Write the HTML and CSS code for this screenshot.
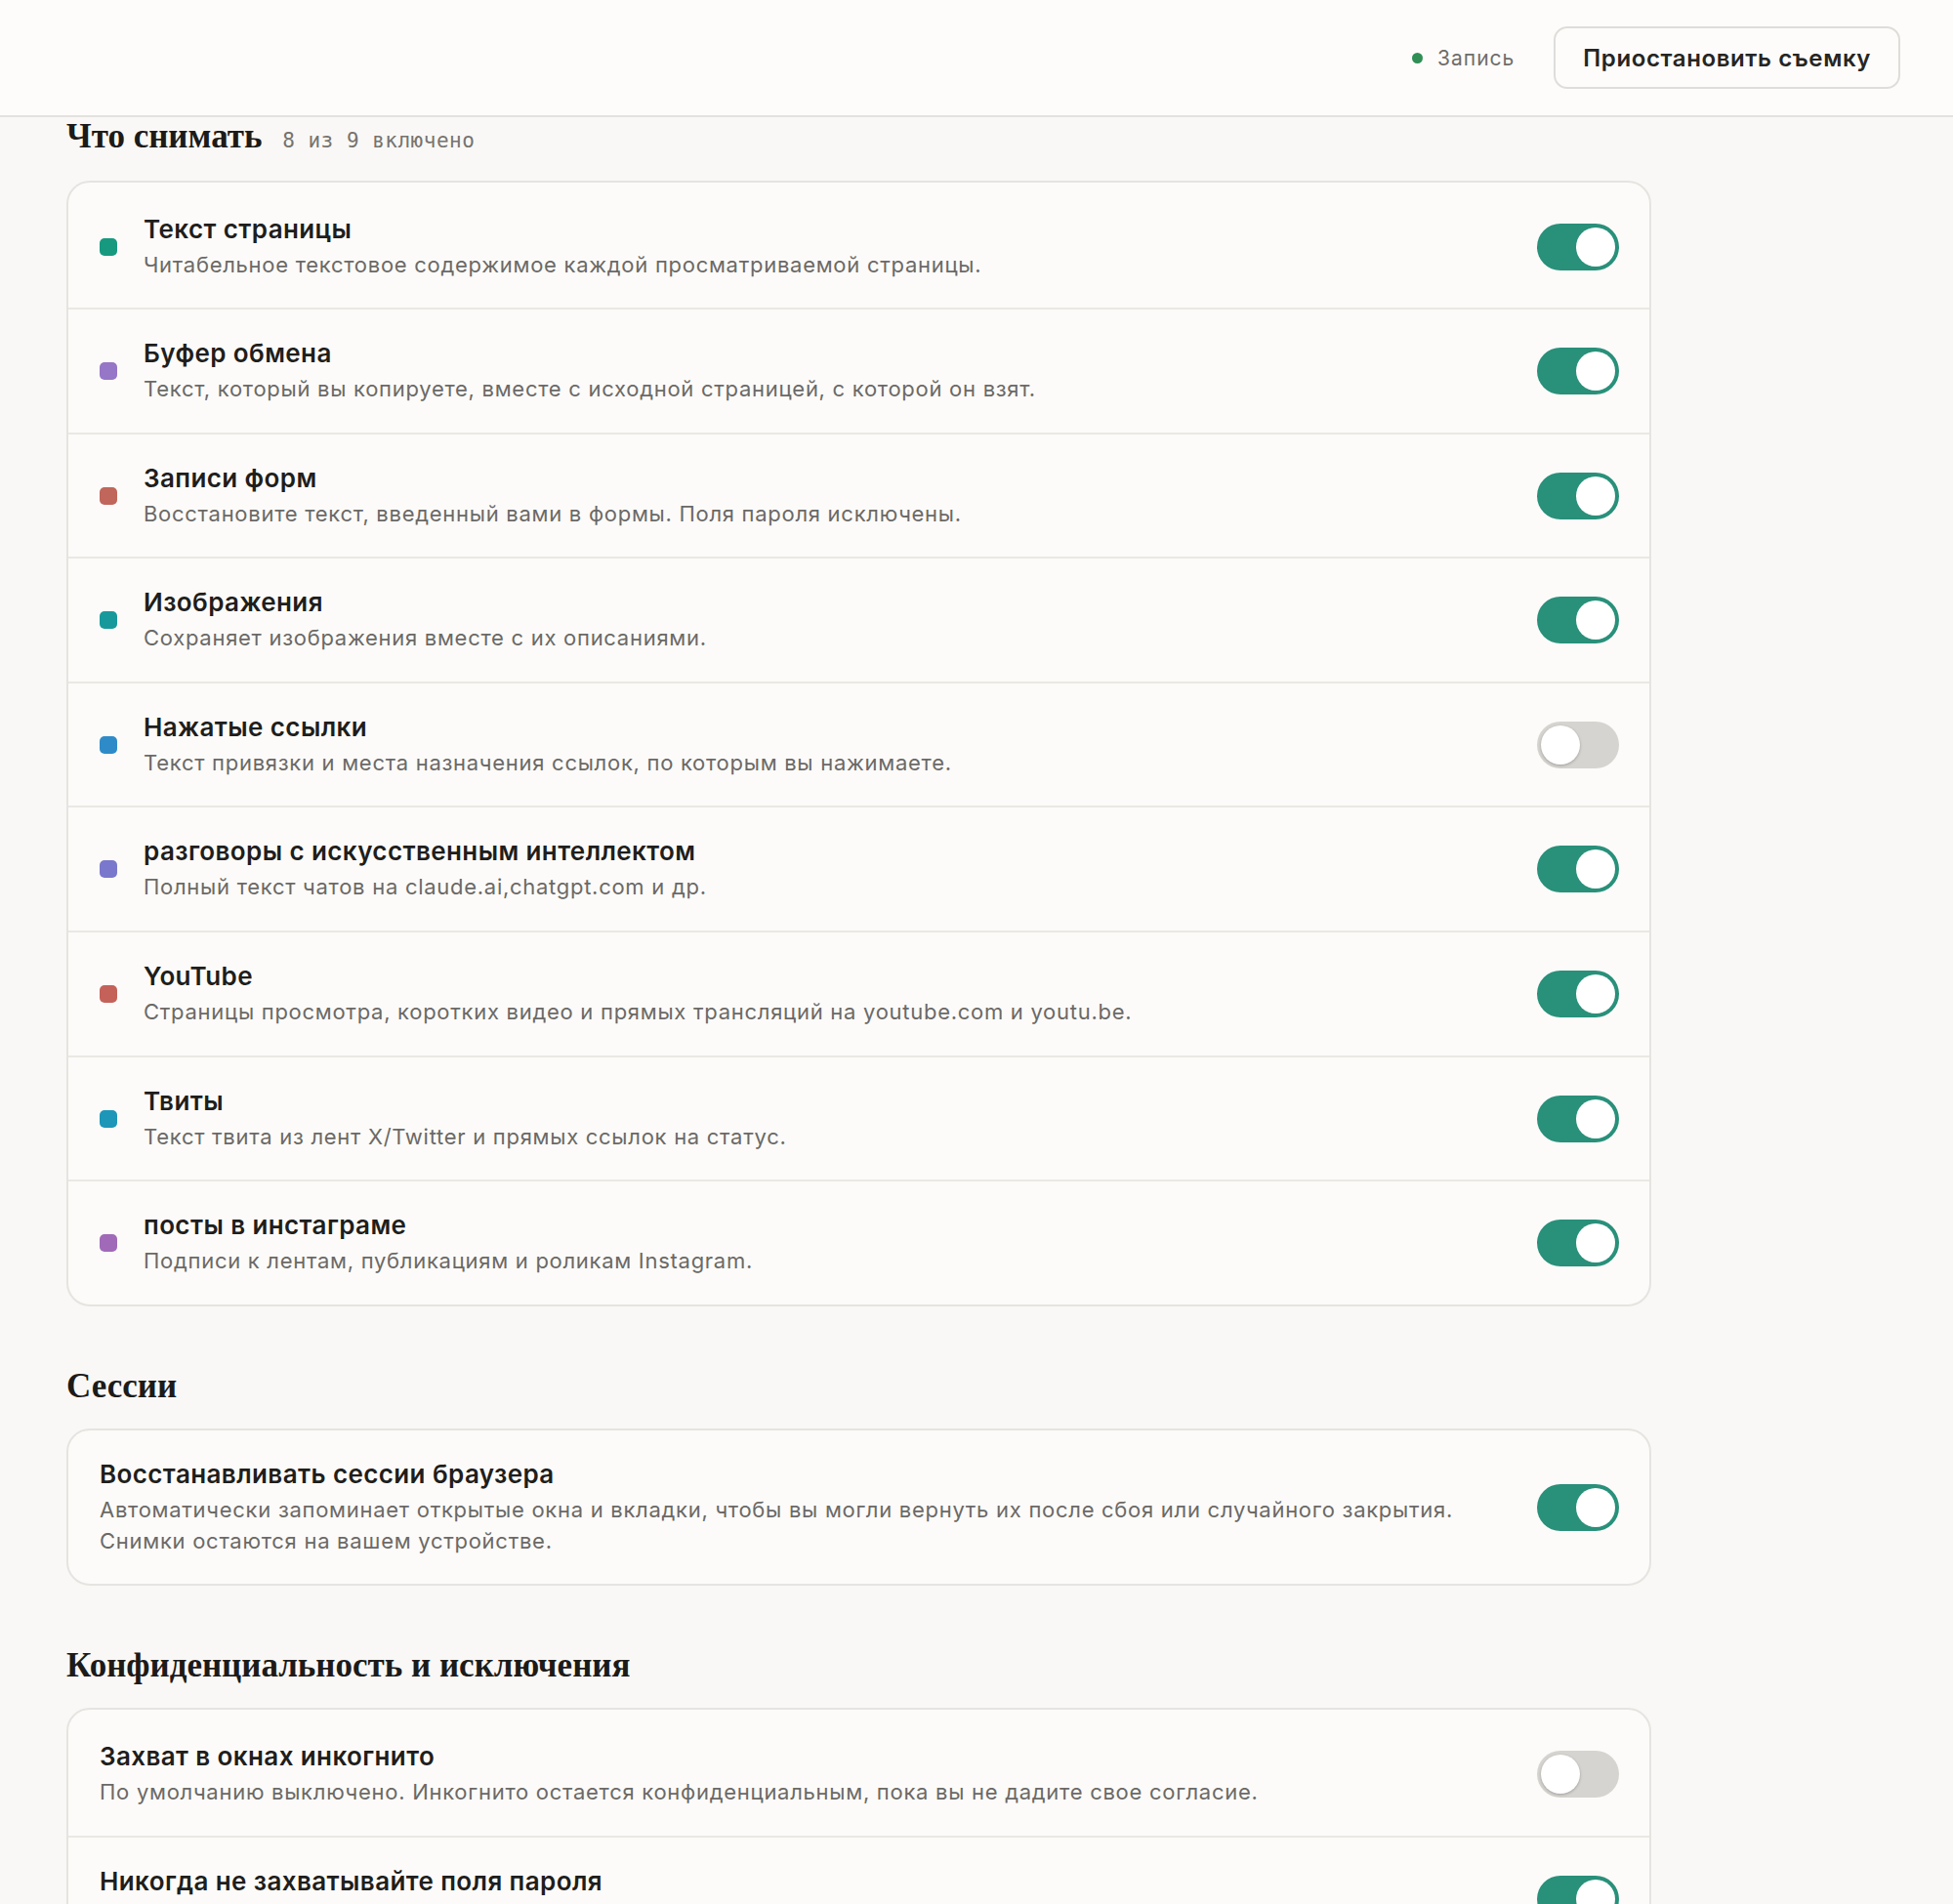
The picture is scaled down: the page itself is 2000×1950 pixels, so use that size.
FILE: index.html
```html
<!DOCTYPE html>
<html lang="ru">
<head>
  <meta charset="UTF-8">
  <meta name="viewport" content="width=device-width, initial-scale=1.0">
  <title>Настройки съемки</title>
  <link rel="stylesheet" href="styles.css">
</head>
<body>
<header class="top-bar">
  <div class="rec-status">
    <span class="rec-dot"></span>
    <span class="rec-label">Запись</span>
  </div>
  <button class="pause-btn">Приостановить съемку</button>
</header>

<main class="settings">
  <section class="group">
    <h2 class="group-title">Что снимать <span class="group-count">8 из 9 включено</span></h2>
    <div class="card">
      <div class="row">
        <span class="dot dot-page"></span>
        <div class="row-text">
          <div class="row-title">Текст страницы</div>
          <div class="row-desc">Читабельное текстовое содержимое каждой просматриваемой страницы.</div>
        </div>
        <span class="toggle on"><span class="knob"></span></span>
      </div>
      <div class="row">
        <span class="dot dot-clip"></span>
        <div class="row-text">
          <div class="row-title">Буфер обмена</div>
          <div class="row-desc">Текст, который вы копируете, вместе с исходной страницей, с которой он взят.</div>
        </div>
        <span class="toggle on"><span class="knob"></span></span>
      </div>
      <div class="row">
        <span class="dot dot-form"></span>
        <div class="row-text">
          <div class="row-title">Записи форм</div>
          <div class="row-desc">Восстановите текст, введенный вами в формы. Поля пароля исключены.</div>
        </div>
        <span class="toggle on"><span class="knob"></span></span>
      </div>
      <div class="row">
        <span class="dot dot-img"></span>
        <div class="row-text">
          <div class="row-title">Изображения</div>
          <div class="row-desc">Сохраняет изображения вместе с их описаниями.</div>
        </div>
        <span class="toggle on"><span class="knob"></span></span>
      </div>
      <div class="row">
        <span class="dot dot-link"></span>
        <div class="row-text">
          <div class="row-title">Нажатые ссылки</div>
          <div class="row-desc">Текст привязки и места назначения ссылок, по которым вы нажимаете.</div>
        </div>
        <span class="toggle"><span class="knob"></span></span>
      </div>
      <div class="row">
        <span class="dot dot-ai"></span>
        <div class="row-text">
          <div class="row-title">разговоры с искусственным интеллектом</div>
          <div class="row-desc">Полный текст чатов на claude.ai,chatgpt.com и др.</div>
        </div>
        <span class="toggle on"><span class="knob"></span></span>
      </div>
      <div class="row">
        <span class="dot dot-yt"></span>
        <div class="row-text">
          <div class="row-title">YouTube</div>
          <div class="row-desc">Страницы просмотра, коротких видео и прямых трансляций на youtube.com и youtu.be.</div>
        </div>
        <span class="toggle on"><span class="knob"></span></span>
      </div>
      <div class="row">
        <span class="dot dot-tw"></span>
        <div class="row-text">
          <div class="row-title">Твиты</div>
          <div class="row-desc">Текст твита из лент X/Twitter и прямых ссылок на статус.</div>
        </div>
        <span class="toggle on"><span class="knob"></span></span>
      </div>
      <div class="row">
        <span class="dot dot-ig"></span>
        <div class="row-text">
          <div class="row-title">посты в инстаграме</div>
          <div class="row-desc">Подписи к лентам, публикациям и роликам Instagram.</div>
        </div>
        <span class="toggle on"><span class="knob"></span></span>
      </div>
    </div>
  </section>

  <section class="group">
    <h2 class="group-title">Сессии</h2>
    <div class="card">
      <div class="row">
        <div class="row-text">
          <div class="row-title">Восстанавливать сессии браузера</div>
          <div class="row-desc">Автоматически запоминает открытые окна и вкладки, чтобы вы могли вернуть их после сбоя или случайного закрытия.<br>Снимки остаются на вашем устройстве.</div>
        </div>
        <span class="toggle on"><span class="knob"></span></span>
      </div>
    </div>
  </section>

  <section class="group">
    <h2 class="group-title">Конфиденциальность и исключения</h2>
    <div class="card">
      <div class="row">
        <div class="row-text">
          <div class="row-title">Захват в окнах инкогнито</div>
          <div class="row-desc">По умолчанию выключено. Инкогнито остается конфиденциальным, пока вы не дадите свое согласие.</div>
        </div>
        <span class="toggle"><span class="knob"></span></span>
      </div>
      <div class="row">
        <div class="row-text">
          <div class="row-title">Никогда не захватывайте поля пароля</div>
          <div class="row-desc">Значения полей пароля никогда не сохраняются.</div>
        </div>
        <span class="toggle on"><span class="knob"></span></span>
      </div>
    </div>
  </section>
</main>
</body>
</html>
```

FILE: styles.css
```css
body {
  margin: 0;
  font-family: Inter, "Noto Sans", sans-serif;
  background-color: #f9f8f6;
  color: #1f1e1c;
}

/* Верхняя панель */
.top-bar {
  display: flex;
  justify-content: flex-end;
  align-items: center;
  height: 118px;
  padding: 0 54px;
  background-color: #fdfcfb;
  border-bottom: 2px solid #e4e2de;
}

.rec-status {
  display: flex;
  align-items: center;
  gap: 15px;
  margin-right: 40px;
}

.rec-dot {
  width: 11px;
  height: 11px;
  border-radius: 50%;
  background-color: #2f8f55;
}

.rec-label {
  font-size: 21px;
  letter-spacing: 1px;
  color: #6f6d6a;
}

.pause-btn {
  height: 64px;
  padding: 0 28px;
  font-family: inherit;
  font-size: 24px;
  letter-spacing: 0.6px;
  font-weight: 600;
  color: #262523;
  background-color: #fdfcfb;
  border: 2px solid #dfddd9;
  border-radius: 14px;
}

/* Группы настроек */
.settings {
  width: 1623px;
  margin-left: 68px;
}

.group + .group {
  margin-top: 62px;
}

.group-title {
  margin: 0 0 21px;
  font-family: "Liberation Serif", serif;
  font-size: 35px;
  line-height: 40px;
  font-weight: bold;
  color: #1c1b19;
}

.group + .group .group-title {
  margin-bottom: 23px;
}

.group-count {
  margin-left: 12px;
  font-family: "DejaVu Sans Mono", monospace;
  font-size: 21px;
  font-weight: normal;
  letter-spacing: 0.5px;
  color: #76736f;
}

.card {
  background-color: #fcfbf9;
  border: 2px solid #e6e4e0;
  border-radius: 24px;
  overflow: hidden;
}

.row {
  display: flex;
  align-items: center;
  padding: 29px 31px 28.6px 32px;
}

.row:first-child:not(:last-child) {
  padding-top: 31.5px;
}

.row + .row {
  border-top: 2px solid #eae8e4;
}

.dot {
  flex-shrink: 0;
  width: 18px;
  height: 18px;
  border-radius: 5px;
  margin-right: 27px;
}

.dot-page { background-color: #16997f; }
.dot-clip { background-color: #9676c6; }
.dot-form { background-color: #c0665a; }
.dot-img  { background-color: #17999b; }
.dot-link { background-color: #2e8bc8; }
.dot-ai   { background-color: #7a78cc; }
.dot-yt   { background-color: #c4625a; }
.dot-tw   { background-color: #1d96b8; }
.dot-ig   { background-color: #a06ab8; }

.row-text {
  flex: 1;
}

.row-title {
  font-size: 26px;
  line-height: 32px;
  letter-spacing: 0.4px;
  font-weight: 600;
  color: #1f1e1c;
}

.row-desc {
  margin-top: 4px;
  font-size: 22px;
  line-height: 32px;
  letter-spacing: 0.72px;
  color: #6b6966;
}

/* Переключатель */
.toggle {
  flex-shrink: 0;
  display: flex;
  width: 84px;
  height: 48px;
  padding: 4px;
  box-sizing: border-box;
  border-radius: 24px;
  background-color: #d6d4d0;
}

.toggle.on {
  justify-content: flex-end;
  background-color: #29907a;
}

.knob {
  width: 40px;
  height: 40px;
  border-radius: 50%;
  background-color: #ffffff;
  box-shadow: 0 1px 3px rgba(0, 0, 0, 0.25);
}

.toggle.on .knob {
  box-shadow: none;
}
```
